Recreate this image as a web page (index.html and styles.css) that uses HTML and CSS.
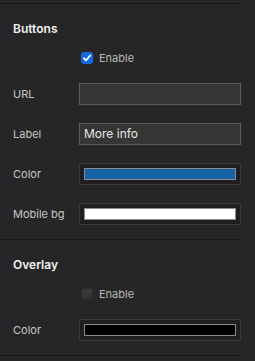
FILE: index.html
```html
<!DOCTYPE html>
<html lang="en">
<head>
    <meta charset="UTF-8">
    <title>Banner settings</title>
    <link rel="stylesheet" href="styles.css">
</head>
<body>
    <div class="panel">
        <section class="group">
            <h2>Buttons</h2>
            <div class="check-row">
                <span class="box checked">
                    <svg width="10" height="10" viewBox="0 0 10 10"><path d="M1.8 5.2 L4 7.4 L8.3 2.4" fill="none" stroke="#fff" stroke-width="1.7" stroke-linecap="round" stroke-linejoin="round"/></svg>
                </span>
                <span class="check-label">Enable</span>
            </div>
            <div class="field">
                <label>URL</label>
                <div class="text-input"></div>
            </div>
            <div class="field">
                <label>Label</label>
                <div class="text-input">More info</div>
            </div>
            <div class="field">
                <label>Color</label>
                <div class="color-input"><span class="swatch blue"></span></div>
            </div>
            <div class="field">
                <label>Mobile bg</label>
                <div class="color-input"><span class="swatch white"></span></div>
            </div>
        </section>

        <section class="group">
            <h2>Overlay</h2>
            <div class="check-row">
                <span class="box"></span>
                <span class="check-label">Enable</span>
            </div>
            <div class="field">
                <label>Color</label>
                <div class="color-input"><span class="swatch black"></span></div>
            </div>
        </section>
    </div>
</body>
</html>
```

FILE: styles.css
```css
* {
    margin: 0;
    padding: 0;
    box-sizing: border-box;
}
body {
    font-family: 'Inter', 'Noto Sans', sans-serif;
    background: #262628;
    color: #d0d0d0;
    padding-top: 3px;
}
.panel {
    width: 241px;
}
.group {
    border-top: 1px solid #19191b;
    padding: 17px 0 14px 13px;
}
.group:last-child {
    border-bottom: 1px solid #19191b;
}
h2 {
    font-size: 12px;
    font-weight: 600;
    line-height: 16px;
    color: #f2f2f2;
}
.check-row {
    display: flex;
    align-items: center;
    height: 22px;
    margin-top: 10px;
    padding-left: 68px;
}
.box {
    width: 12px;
    height: 12px;
    border-radius: 3px;
    background: linear-gradient(#3c3c3e, #313133);
    border: 1px solid #2c2c2e;
    display: flex;
    align-items: center;
    justify-content: center;
}
.box.checked {
    background: #1268e0;
    border-color: #1b6fe6;
}
.check-label {
    margin-left: 6px;
    font-size: 11px;
    color: #b8b8b8;
}
.field {
    display: grid;
    grid-template-columns: 66px 162px;
    align-items: center;
    height: 22px;
    margin-top: 18px;
}
.check-row + .field {
    margin-top: 14px;
}
.field label {
    font-size: 11px;
    color: #c6c6c6;
}
.text-input {
    height: 22px;
    background: #363636;
    border: 1px solid #5c5c5c;
    font-size: 12px;
    line-height: 20px;
    padding-left: 4px;
    color: #e6e6e6;
}
.color-input {
    height: 22px;
    background: #1f1f20;
    border: 1px solid #3a3a3b;
    padding: 4px;
}
.swatch {
    display: block;
    height: 12px;
    border: 1px solid #8c8c8c;
}
.swatch.blue {
    background: #1464a6;
}
.swatch.white {
    background: #ffffff;
}
.swatch.black {
    background: #000000;
}
```
